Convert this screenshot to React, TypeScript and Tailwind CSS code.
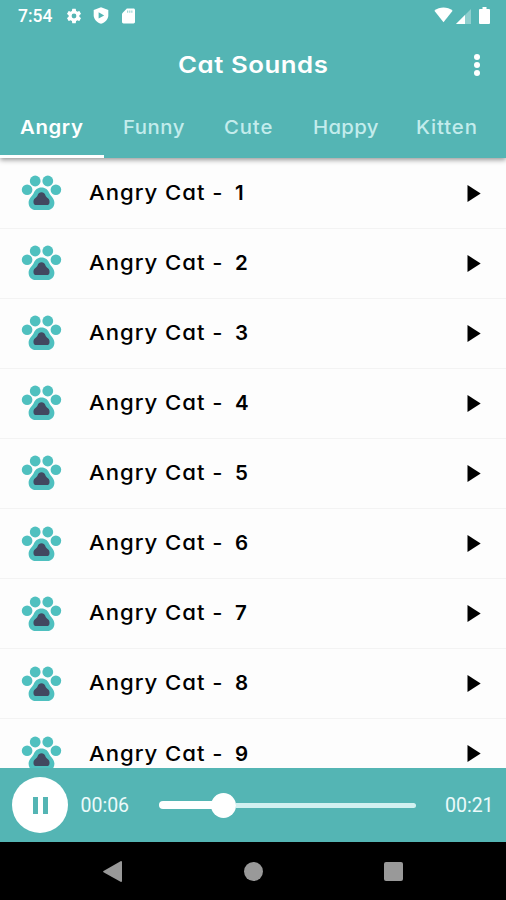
const teal = '#54b5b4';

const tabs = [
  { label: 'Angry', cls: 'w-[103px] tracking-[0.6px] font-semibold text-white' },
  { label: 'Funny', cls: 'w-[101px] tracking-[0.5px] font-medium text-[#c3ecec]' },
  { label: 'Cute', cls: 'w-[89px] tracking-[0.8px] font-medium text-[#c3ecec]' },
  { label: 'Happy', cls: 'w-[103px] tracking-[0.3px] font-medium text-[#c3ecec]' },
  { label: 'Kitten', cls: 'w-[101px] tracking-[0.8px] font-medium text-[#c3ecec]' },
];

function Paw() {
  return (
    <svg className="ml-[21px] h-[36px] w-[41px] shrink-0" viewBox="0 0 41 36">
      <g fill="#4fc0bf">
        <circle cx="14.200" cy="6" r="5.400" />
        <circle cx="26.800" cy="6" r="5.400" />
        <circle cx="6.100" cy="14.800" r="5.300" />
        <circle cx="34.900" cy="14.800" r="5.300" />
        <path d="M20.500 12.400c4 0 6.600 2.300 8 6 .9 2.300 4.900 4.700 4.900 9.400 0 4.300-3 7.300-7 7.300H14.600c-4 0-7-3-7-7.300 0-4.700 4-7.100 4.900-9.400 1.400-3.700 4-6 8-6Z" />
      </g>
      <path
        fill="#424860"
        d="M20.500 17.200c1.900 0 3.100 1 3.700 2.600.6 1.800 1.400 2.600 2.700 3.500 1.300.9 1.800 2.500 1.600 4.200-.2 1.800-1.100 2.600-2.800 2.600H15.300c-1.700 0-2.600-.8-2.800-2.600-.2-1.700.3-3.300 1.600-4.200 1.300-.9 2.100-1.700 2.700-3.500.6-1.600 1.800-2.600 3.700-2.600Z"
      />
    </svg>
  );
}

function StatusBar() {
  return (
    <div className="flex h-8 items-center pl-[18px] pr-[16px] text-white">
      <span className="w-[47px] pt-px font-[Roboto] text-[17.500px] font-medium leading-none">7:54</span>
      <svg className="h-[18px] w-[18px]" viewBox="0 0 24 24" fill="currentColor">
        <path d="M19.140 12.940c.04-.3.060-.61.060-.94s-.02-.64-.07-.94l2.030-1.580a.49.49 0 0 0 .12-.61l-1.920-3.320a.49.49 0 0 0-.59-.22l-2.390.96a7 7 0 0 0-1.620-.94l-.36-2.540A.48.48 0 0 0 13.920 2.400h-3.840a.48.48 0 0 0-.48.41l-.36 2.540a7.300 7.300 0 0 0-1.620.94l-2.390-.96a.49.49 0 0 0-.59.22L2.720 8.870a.48.48 0 0 0 .12.61l2.030 1.580a7 7 0 0 0 0 1.880l-2.030 1.580a.49.49 0 0 0-.12.61l1.920 3.320c.12.22.37.29.59.22l2.390-.96c.5.38 1.030.7 1.620.94l.36 2.540c.05.24.24.41.48.41h3.840c.24 0 .44-.17.47-.41l.36-2.540a7 7 0 0 0 1.620-.94l2.390.96c.22.08.47 0 .59-.22l1.920-3.320a.48.48 0 0 0-.12-.61ZM12 15.200a3.200 3.200 0 1 1 0-6.400 3.200 3.200 0 0 1 0 6.400Z" />
      </svg>
      <svg className="-mt-px ml-[10px] h-[17px] w-[16px]" viewBox="0 0 16 17">
        <path fill="currentColor" d="M8 .3 15.300 3v5.200c0 4-3 7.200-7.300 8.500C3.700 15.400.7 12.200.7 8.200V3Z" />
        <path fill={teal} d="m5.600 5.200 5.600 3.200-5.600 3.200Z" />
      </svg>
      <svg className="-mt-px ml-[13px] h-[16px] w-[13px]" viewBox="0 0 14 16">
        <path fill="currentColor" d="M5.200 0h7.200C13.300 0 14 .7 14 1.600v12.800c0 .9-.7 1.600-1.600 1.600H1.600C.7 16 0 15.300 0 14.400V5.200Z" />
        <path fill={teal} opacity=".6" d="M5.500 2h1.200v2.500H5.500zm2.300 0H9v2.500H7.800zM10 2h1.200v2.500H10z" />
      </svg>
      <div className="ml-auto flex items-center">
        <svg className="-mt-[2px] h-[16px] w-[19px]" viewBox="0 0 20 16">
          <path fill="currentColor" d="M.4 3.600C5.900-.9 14.100-.9 19.600 3.600L10 15.600Z" />
        </svg>
        <svg className="ml-[3px] h-[15px] w-[15px]" viewBox="0 0 15 15">
          <path fill="#8fcfce" d="M15 0v15H0Z" />
          <path fill="currentColor" d="M9 6V15H0Z" />
        </svg>
        <svg className="-mt-[2px] ml-[8px] h-[17px] w-[11px]" viewBox="0 0 11 17">
          <path fill="currentColor" d="M3.500 0h4v2H10q1 0 1 1v13q0 1-1 1H1q-1 0-1-1V3q0-1 1-1h2.500Z" />
        </svg>
      </div>
    </div>
  );
}

export default function App() {
  return (
    <div className="flex h-[900px] w-[506px] flex-col overflow-hidden bg-[#fdfdfd] font-[Inter,sans-serif] [font-feature-settings:'cv11']">
      <header className="z-10 flex h-[158px] shrink-0 flex-col bg-[#54b5b4] shadow-[0_2px_5px_rgba(0,0,0,0.4)]">
        <StatusBar />
        <div className="flex h-[65px] items-center justify-end">
          <h1 className="mr-[145px] w-[151px] origin-left scale-x-[1.12] whitespace-nowrap pt-[2px] text-[23px] font-semibold leading-none tracking-[0.5px] text-white">Cat Sounds</h1>
          <div className="mr-[26px] flex w-[6px] flex-col gap-[2px]">
            <i className="size-[6px] rounded-full bg-white" />
            <i className="size-[6px] rounded-full bg-white" />
            <i className="size-[6px] rounded-full bg-white" />
          </div>
        </div>
        <nav className="flex h-[58px] items-center pt-[2px]">
          {tabs.map((t) => (
            <span key={t.label} className={`shrink-0 pl-5 text-[19px] leading-none ${t.cls}`}>
              <span className="inline-block origin-left scale-x-[1.070]">{t.label}</span>
            </span>
          ))}
        </nav>
        <div className="h-[3px] w-[104px] shrink-0 bg-white" />
      </header>
      <main className="min-h-0 flex-1 overflow-hidden pt-[0.5px]">
        {[1, 2, 3, 4, 5, 6, 7, 8, 9].map((n) => (
          <div key={n} className="flex h-[70.1px] items-center border-b border-[#f3f3f3]">
            <Paw />
            <span className="ml-[27px] w-[146px] origin-left scale-x-[1.080] whitespace-nowrap text-[20.500px] font-medium leading-none tracking-[0.900px] text-black">Angry Cat -</span>
            <span className="text-[20.500px] font-semibold leading-none text-black">{n}</span>
            <svg className="ml-auto mr-[25px] h-[17px] w-[14px]" viewBox="0 0 14 17">
              <path d="M.5 0 13.700 8.500.5 17Z" />
            </svg>
          </div>
        ))}
      </main>
      <section className="flex h-[74px] shrink-0 items-center bg-[#54b5b4] font-[Roboto] text-[19.500px] text-[#ecfafa]">
        <button className="ml-3 flex size-[56px] items-center justify-center gap-[5px] rounded-full bg-white">
          <i className="h-[17px] w-[5px] bg-[#54b5b4]" />
          <i className="h-[17px] w-[5px] bg-[#54b5b4]" />
        </button>
        <span className="ml-[12.500px] w-[78.500px] pt-px">00:06</span>
        <div className="flex h-[26px] w-[257px] items-center">
          <div className="h-[8px] w-[54px] rounded-l-full bg-white" />
          <div className="-ml-[2px] size-[25px] rounded-full bg-white" />
          <div className="h-[5px] flex-1 rounded-r-full bg-[#d2f1f1]" />
        </div>
        <span className="ml-[29px] pt-px">00:21</span>
      </section>
      <footer className="flex h-[58px] shrink-0 items-center bg-black">
        <svg className="ml-[103px] h-[21px] w-[19px]" viewBox="0 0 19 21">
          <path fill="#999" d="M18 0q1 0 1 1v19q0 1-1 1L.5 11.200q-.8-.6 0-1.200Z" />
        </svg>
        <i className="ml-[122px] size-[19px] rounded-full bg-[#999]" />
        <i className="ml-[121px] size-[19px] rounded-[2px] bg-[#999]" />
      </footer>
    </div>
  );
}
